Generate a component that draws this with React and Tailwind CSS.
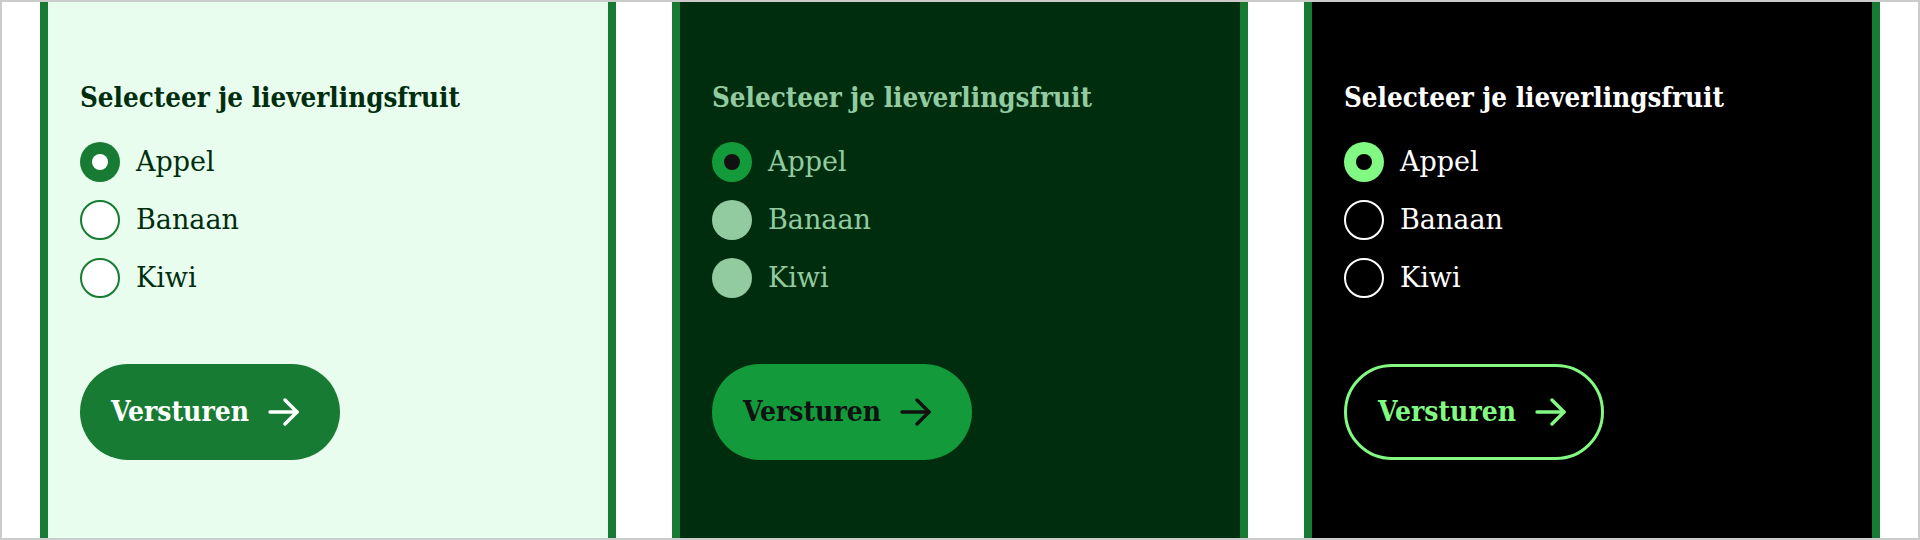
import React, { useState } from 'react';

const fruits = ['Appel', 'Banaan', 'Kiwi'];

// three colour schemes of the same form
const themes = [
  {
    key: 'light',
    panel: 'bg-[#e8fdee]',
    text: 'text-[#012d0f]',
    radioOn: 'bg-[#177b33]',
    dot: 'bg-white',
    radioOff: 'bg-white border-2 border-[#177b33]',
    button: 'bg-[#177b33] text-white',
  },
  {
    key: 'dark',
    panel: 'bg-[#012d0f]',
    text: 'text-[#93cba0]',
    radioOn: 'bg-[#139b3b]',
    dot: 'bg-[#111111]',
    radioOff: 'bg-[#93cba0]',
    button: 'bg-[#139b3b] text-[#111111]',
  },
  {
    key: 'contrast',
    panel: 'bg-black',
    text: 'text-white',
    radioOn: 'bg-[#82f982]',
    dot: 'bg-black',
    radioOff: 'bg-black border-2 border-white',
    button: 'bg-black border-[3px] border-[#82f982] text-[#82f982]',
  },
];

const Arrow = () => (
  <svg width="32" height="28" viewBox="0 0 32 28" fill="none" stroke="currentColor" strokeWidth="3.4" strokeLinecap="round" strokeLinejoin="round">
    <path d="M2 14h27" />
    <path d="M17 2l12 12-12 12" />
  </svg>
);

const FruitForm = ({ theme }) => {
  const [choice, setChoice] = useState('Appel');

  return (
    <div className={`w-[576px] h-full shrink-0 border-x-8 border-[#177b33] pt-[77px] pl-8 ${theme.panel} ${theme.text}`}>
      <h2 className="h-9 leading-9 text-[27.5px] font-bold font-['DejaVu_Serif_Condensed','DejaVu_Serif',serif]">
        Selecteer je lieverlingsfruit
      </h2>

      <div className="mt-[27px] flex flex-col gap-[18px]">
        {fruits.map((fruit) => (
          <label
            key={fruit}
            onClick={() => setChoice(fruit)}
            className="flex items-center gap-4 h-10 cursor-pointer"
          >
            {choice === fruit ? (
              <span className={`w-10 h-10 rounded-full flex items-center justify-center ${theme.radioOn}`}>
                <span className={`w-4 h-4 rounded-full ${theme.dot}`} />
              </span>
            ) : (
              <span className={`w-10 h-10 rounded-full ${theme.radioOff}`} />
            )}
            <span className="text-[27px] leading-10 font-['DejaVu_Serif',serif]">{fruit}</span>
          </label>
        ))}
      </div>

      <button
        className={`mt-[66px] w-[260px] h-24 rounded-full flex items-center gap-[19px] pl-[31px] ${theme.button}`}
      >
        <span className="text-[28px] leading-10 font-bold font-['DejaVu_Serif_Condensed','DejaVu_Serif',serif]">
          Versturen
        </span>
        <Arrow />
      </button>
    </div>
  );
};

export default function App() {
  return (
    <div className="w-[1920px] h-[540px] border-2 border-[#cccccc] bg-white flex gap-[56px] pl-[38px] overflow-hidden">
      {themes.map((t) => (
        <FruitForm key={t.key} theme={t} />
      ))}
    </div>
  );
}
